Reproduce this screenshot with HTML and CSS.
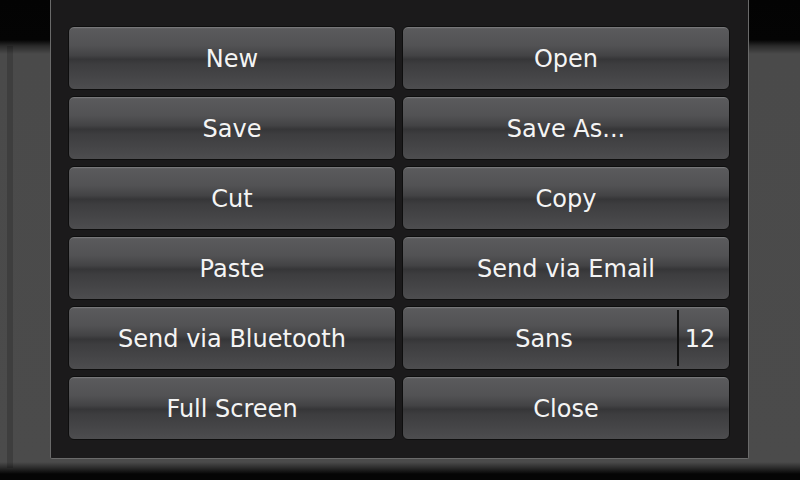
FILE: index.html
```html
<!DOCTYPE html>
<html lang="en">
<head>
    <meta charset="UTF-8">
    <meta name="viewport" content="width=device-width, initial-scale=1.0">
    <title>Menu</title>
    <link rel="stylesheet" href="styles.css">
</head>
<body>

    <div class="menu">
        <div class="menu-grid">
            <button class="menu-btn">New</button>
            <button class="menu-btn">Open</button>
            <button class="menu-btn">Save</button>
            <button class="menu-btn">Save As...</button>
            <button class="menu-btn">Cut</button>
            <button class="menu-btn">Copy</button>
            <button class="menu-btn">Paste</button>
            <button class="menu-btn">Send via Email</button>
            <button class="menu-btn">Send via Bluetooth</button>
            <button class="menu-btn font-btn">
                <span class="font-name">Sans</span>
                <span class="font-size">12</span>
            </button>
            <button class="menu-btn">Full Screen</button>
            <button class="menu-btn">Close</button>
        </div>
    </div>

</body>
</html>
```

FILE: styles.css
```css
html, body {
    height: 100%;
}

body {
    margin: 0;
    padding: 0;
    overflow: hidden;
    font-family: "DejaVu Sans", sans-serif;
    background:
        linear-gradient(to bottom, #030303 0, #040404 40px, #2a2a2a 46px, #4a4a4a 54px, #4b4b4b 462px, #2a2a2a 468px, #050505 474px),
        #4a4a4a;
}

body::before {
    content: "";
    position: absolute;
    top: 46px;
    bottom: 12px;
    left: 7px;
    width: 6px;
    background: rgba(0, 0, 0, 0.16);
}

.menu {
    width: 699px;
    margin: 0 0 0 50px;
    padding: 26px 18px 18px 17px;
    background-color: #1b1a1b;
    border: 1px solid #6a6a6a;
    border-top: none;
    border-radius: 0 0 2px 2px;
    box-sizing: border-box;
}

.menu-grid {
    display: grid;
    grid-template-columns: 328px 328px;
    grid-auto-rows: 64px;
    gap: 6px;
}

.menu-btn {
    display: flex;
    align-items: center;
    justify-content: center;
    margin: 0;
    padding: 2px 0 0 0;
    font-family: "DejaVu Sans", sans-serif;
    font-size: 24px;
    color: #f4f4f4;
    border: 1px solid #0e0e0e;
    border-radius: 6px;
    background: linear-gradient(to bottom,
        #68686a 0,
        #5a5a5c 4%,
        #525254 30%,
        #434345 46%,
        #363638 52%,
        #3d3d3f 60%,
        #48484a 88%,
        #4d4d4f 100%);
    box-shadow: inset 0 1px 0 rgba(255, 255, 255, 0.12);
    cursor: pointer;
}

.font-btn {
    padding: 0;
    justify-content: stretch;
}

.font-name {
    flex: 1;
    text-align: center;
    padding: 2px 0 0 8px;
}

.font-size {
    width: 52px;
    align-self: stretch;
    display: flex;
    align-items: center;
    justify-content: center;
    padding: 2px 8px 0 0;
    margin: 3px 0;
    border-left: 2px solid #111;
    box-sizing: border-box;
}
```
